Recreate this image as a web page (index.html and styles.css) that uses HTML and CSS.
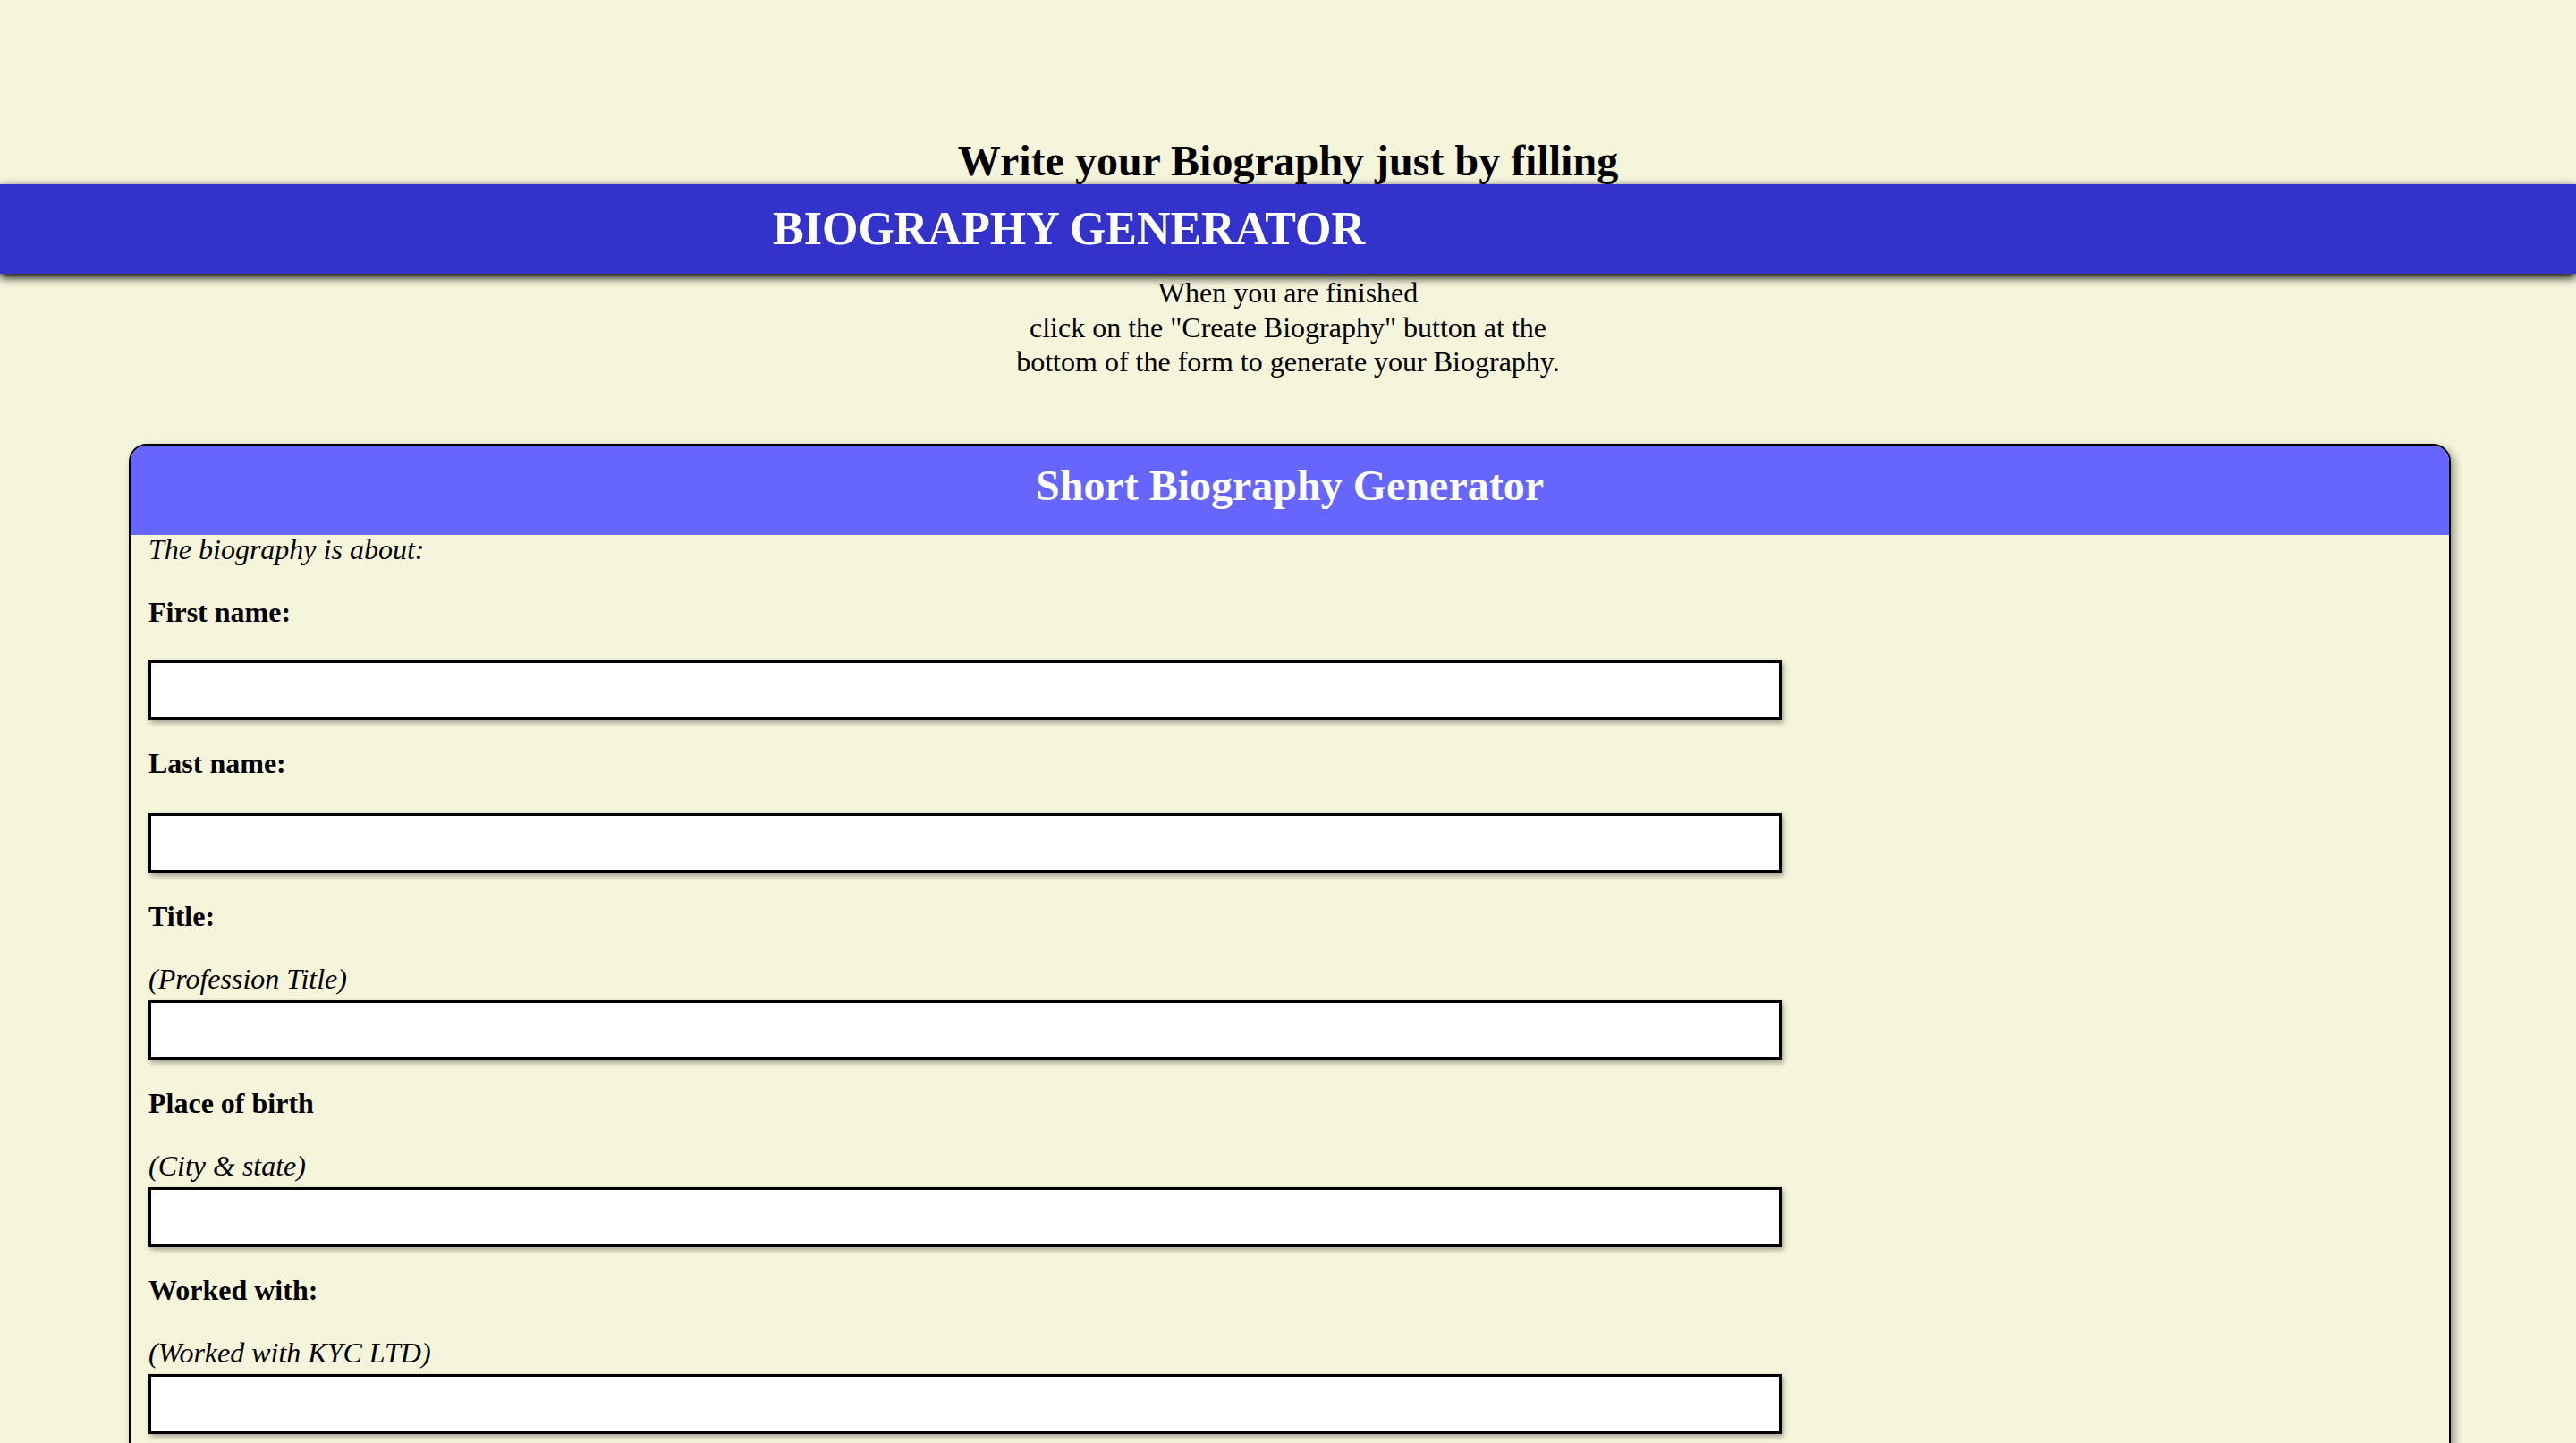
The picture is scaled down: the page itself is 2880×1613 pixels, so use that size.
FILE: index.html
```html
<!DOCTYPE html>
<html lang="en">
<head>
<meta charset="utf-8">
<title>Biography Generator</title>
<link rel="stylesheet" href="styles.css">
</head>
<body>
  <h2 class="lead-title">Write your Biography just by filling</h2>
  <header class="topbar">
    <h1 class="topbar-title">BIOGRAPHY GENERATOR</h1>
  </header>
  <p class="intro">When you are finished<br>click on the "Create Biography" button at the<br>bottom of the form to generate your Biography.</p>

  <form class="card">
    <h2 class="card-head">Short Biography Generator</h2>
    <div class="card-body">
      <p class="about">The biography is about:</p>

      <div class="field">
        <label class="label">First name:</label>
        <input class="input" type="text">
      </div>

      <div class="field">
        <label class="label">Last name:</label>
        <input class="input" type="text">
      </div>

      <div class="field">
        <label class="label">Title:</label>
        <span class="hint">(Profession Title)</span>
        <input class="input" type="text">
      </div>

      <div class="field">
        <label class="label">Place of birth</label>
        <span class="hint">(City &amp; state)</span>
        <input class="input" type="text">
      </div>

      <div class="field">
        <label class="label">Worked with:</label>
        <span class="hint">(Worked with KYC LTD)</span>
        <input class="input" type="text">
      </div>
    </div>
  </form>
</body>
</html>
```

FILE: styles.css
```css
html, body {
  margin: 0;
  padding: 0;
}

body {
  background: beige;
  font-family: "Liberation Serif", "Times New Roman", serif;
  color: #000;
  font-size: 32px;
}

.lead-title {
  margin: 153px 0 0;
  font-size: 48px;
  line-height: 53px;
  font-weight: bold;
  text-align: center;
}

.topbar {
  position: relative;
  height: 100px;
  background: #3333cc;
  box-shadow: 0 4px 10px #000;
  padding-left: 30%;
  display: flex;
  align-items: center;
}

.topbar-title {
  margin: 0;
  color: #fff;
  font-size: 52px;
  line-height: 100px;
  font-weight: bold;
  white-space: nowrap;
}

.intro {
  margin: 2px 0 0;
  text-align: center;
  line-height: 38.5px;
  white-space: nowrap;
}

.card {
  margin: 72px 0 0 5%;
  width: 90%;
  border: 2px solid #000;
  border-radius: 20px;
  box-shadow: 4px 4px 10px rgba(0, 0, 0, 0.4);
  overflow: hidden;
}

.card-head {
  margin: 0;
  height: 100px;
  line-height: 90px;
  background: #6666ff;
  color: #fff;
  font-size: 48px;
  font-weight: bold;
  text-align: center;
}

.card-body {
  padding: 0 20px 60px;
  line-height: 32px;
}

.about {
  margin: 0;
  font-style: italic;
}

.field {
  display: flex;
  flex-direction: column;
  align-items: flex-start;
  margin-top: 38px;
}

.field + .field {
  margin-top: 32px;
}

.label {
  font-weight: bold;
  margin-bottom: 38px;
}

.field + .field .label + .input {
  margin-top: 2px;
}

.hint {
  font-style: italic;
  margin-bottom: 8px;
}

.input {
  box-sizing: border-box;
  width: 71.55%;
  height: 67px;
  margin: 0;
  border: 3px solid #000;
  background: #fff;
  box-shadow: 2px 3px 6px rgba(0, 0, 0, 0.35);
  font-family: "Liberation Serif", serif;
  font-size: 32px;
}
```
